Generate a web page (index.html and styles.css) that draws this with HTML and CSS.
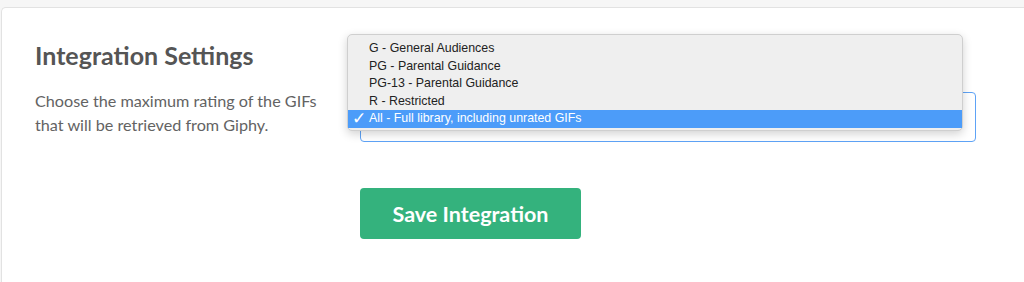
FILE: index.html
```html
<!DOCTYPE html>
<html>
<head>
<meta charset="utf-8">
<link rel="stylesheet" href="styles.css">
</head>
<body>
<div class="page">
  <section class="card">
    <div class="row">
      <div class="info">
        <h2 class="title">Integration Settings</h2>
        <p class="desc">Choose the maximum rating of the GIFs that will be retrieved from Giphy.</p>
      </div>
      <div class="field">
        <div class="select"></div>
        <ul class="menu">
          <li class="opt">G - General Audiences</li>
          <li class="opt">PG - Parental Guidance</li>
          <li class="opt">PG-13 - Parental Guidance</li>
          <li class="opt">R - Restricted</li>
          <li class="opt selected"><span class="check">✓</span>All - Full library, including unrated GIFs</li>
        </ul>
      </div>
    </div>
    <div class="actions">
      <button class="save">Save Integration</button>
    </div>
  </section>
</div>
</body>
</html>
```

FILE: styles.css
```css
html, body {
  margin: 0;
  padding: 0;
  height: 100%;
  overflow: hidden;
}
body {
  background: #f6f6f6;
  font-family: "Lato", "Helvetica Neue", Arial, sans-serif;
}
.page {
  padding: 7px 0 0 1px;
  height: 100%;
  box-sizing: border-box;
}
.card {
  background: #ffffff;
  border: 1px solid #e2e2e2;
  border-right: none;
  border-bottom: none;
  border-top-left-radius: 5px;
  height: 100%;
  box-sizing: border-box;
  padding: 32px 0 0 33px;
}
.row {
  display: grid;
  grid-template-columns: 325px 616px;
}
.title {
  margin: 0;
  font-size: 25px;
  line-height: 30px;
  font-weight: 700;
  color: #555555;
}
.desc {
  margin: 19px 0 0;
  font-size: 16.2px;
  line-height: 24px;
  color: #636363;
  width: 300px;
}
.field {
  position: relative;
}
.select {
  margin-top: 52px;
  height: 50px;
  box-sizing: border-box;
  border: 1px solid #5ea3f6;
  border-radius: 4px;
  background: #fff;
}
.menu {
  position: absolute;
  left: -13px;
  top: -6px;
  width: 616px;
  margin: 0;
  padding: 5px 0 2px;
  list-style: none;
  background: #efefef;
  border: 1px solid #cfcfcf;
  border-radius: 5px;
  box-sizing: border-box;
  box-shadow: 0 3px 10px rgba(0, 0, 0, 0.18);
  font-family: "Liberation Sans", Arial, sans-serif;
  font-size: 12.4px;
  color: #222;
}
.opt {
  height: 17.6px;
  line-height: 17.6px;
  padding-left: 21px;
  position: relative;
}
.opt.selected {
  background: #4c9cf9;
  color: #fff;
}
.check {
  position: absolute;
  left: 4px;
  top: 0;
  font-size: 17px;
  font-weight: 700;
  font-family: "DejaVu Sans", sans-serif;
}
.actions {
  padding: 46px 0 0 325px;
}
.save {
  width: 221px;
  height: 51px;
  border: none;
  border-radius: 4px;
  background: #34b27d;
  color: #fff;
  font-family: "Lato", sans-serif;
  font-weight: 700;
  font-size: 21.5px;
  padding: 0;
  cursor: pointer;
}
```
